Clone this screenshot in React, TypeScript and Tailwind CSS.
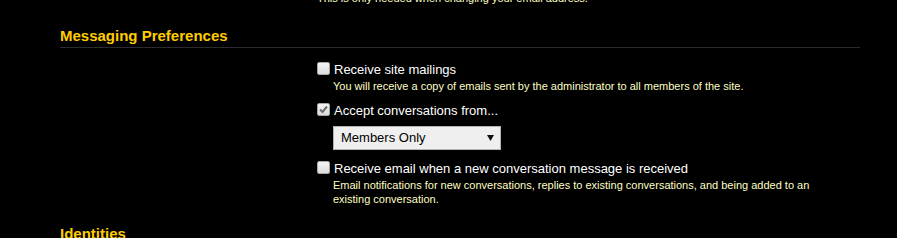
import React from 'react';

const Box = ({ checked }: { checked?: boolean }) => (
  <span className="mt-[1px] flex h-[13px] w-[13px] shrink-0 items-center justify-center rounded-[2px] border border-[#a6a6a6] bg-gradient-to-b from-[#f4f4f4] to-[#dcdcdc]">
    {checked && (
      <svg width="9" height="9" viewBox="0 0 9 9">
        <path d="M1 4.5 L3.5 7 L8 1.5" fill="none" stroke="#6e6e6e" strokeWidth="2" />
      </svg>
    )}
  </span>
);

const Hint = ({ children }: { children: React.ReactNode }) => (
  <p className="max-w-[495px] pl-4 text-[11px] leading-[14px] text-[#ffffc4]">{children}</p>
);

const Option = ({ checked, label }: { checked?: boolean; label: string }) => (
  <label className="flex items-start gap-[4px] text-[13px] leading-[18px] text-white">
    <Box checked={checked} />
    <span>{label}</span>
  </label>
);

export default function App() {
  return (
    <div className="h-[238px] overflow-hidden bg-black font-['Liberation_Sans',Arial,sans-serif]">
      <p className="-mt-[9px] pl-[317px] text-[11px] leading-[14px] text-[#ffffc4]">
        This is only needed when changing your email address.
      </p>

      <div className="ml-[60px] w-[800px]">
        <h3 className="mt-[22px] border-b border-[#2b2b2b] pb-[2px] text-[15px] font-bold leading-[18px] text-[#ffcc00]">
          Messaging Preferences
        </h3>

        <div className="ml-[257px] pt-[13px]">
          <Option label="Receive site mailings" />
          <Hint>You will receive a copy of emails sent by the administrator to all members of the site.</Hint>

          <div className="mt-[9px]">
            <Option checked label="Accept conversations from..." />
          </div>
          <div className="ml-4 mt-[6px] flex h-[24px] w-[168px] items-center justify-between border border-[#b4b4b4] bg-[#efefef] pl-[7px] pr-[6px] text-[13px] text-black">
            <span>Members Only</span>
            <svg width="7" height="6" viewBox="0 0 7 6">
              <path d="M0 0 H7 L3.5 6 Z" fill="#111" />
            </svg>
          </div>

          <div className="mt-[10px]">
            <Option label="Receive email when a new conversation message is received" />
          </div>
          <Hint>
            Email notifications for new conversations, replies to existing conversations, and being added to an existing conversation.
          </Hint>
        </div>

        <h3 className="mt-[19px] text-[15px] font-bold leading-[18px] text-[#ffcc00]">Identities</h3>
      </div>
    </div>
  );
}
